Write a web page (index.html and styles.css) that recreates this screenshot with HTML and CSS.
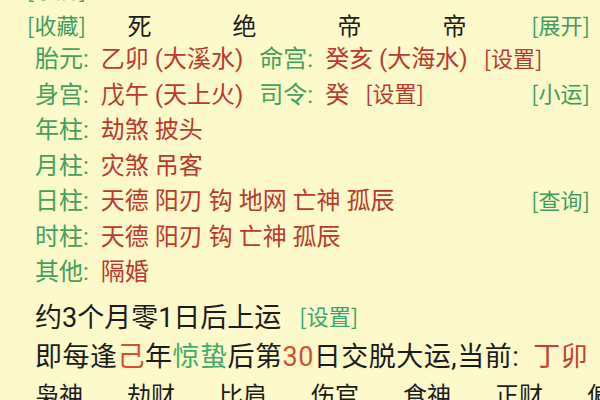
FILE: index.html
```html
<!DOCTYPE html>
<html lang="zh-CN">

<head>
    <meta charset="UTF-8">
    <meta name="viewport" content="width=device-width, initial-scale=1.0">
    <title>排盘</title>
    <link rel="stylesheet" href="styles.css">
</head>

<body>
    <div class="pan">
        <div class="row">
            <span class="link">[字牌]</span>
        </div>
        <div class="row head">
            <span class="link first">[收藏]</span>
            <span class="cell">死</span>
            <span class="cell">绝</span>
            <span class="cell">帝</span>
            <span class="cell">帝</span>
            <span class="link right">[展开]</span>
        </div>

        <div class="info">
            <div class="row">
                <span class="lab">胎元:</span>
                <span class="val">乙卯 (大溪水)</span>
                <span class="lab">命宫:</span>
                <span class="val">癸亥 (大海水)</span>
                <span class="val btn">[设置]</span>
            </div>
            <div class="row">
                <span class="lab">身宫:</span>
                <span class="val">戊午 (天上火)</span>
                <span class="lab">司令:</span>
                <span class="val">癸</span>
                <span class="val btn">[设置]</span>
                <span class="link right">[小运]</span>
            </div>
            <div class="row">
                <span class="lab">年柱:</span>
                <span class="val">劫煞 披头</span>
            </div>
            <div class="row">
                <span class="lab">月柱:</span>
                <span class="val">灾煞 吊客</span>
            </div>
            <div class="row">
                <span class="lab">日柱:</span>
                <span class="val">天德 阳刃 钩 地网 亡神 孤辰</span>
                <span class="link right">[查询]</span>
            </div>
            <div class="row">
                <span class="lab">时柱:</span>
                <span class="val">天德 阳刃 钩 亡神 孤辰</span>
            </div>
            <div class="row">
                <span class="lab">其他:</span>
                <span class="val">隔婚</span>
            </div>
        </div>

        <div class="yun">
            <div class="row">
                <span>约3个月零1日后上运</span>
                <span class="set">[设置]</span>
            </div>
            <div class="row jiao">
                <span>即每逢<em class="hot">己</em>年<em class="jie">惊蛰</em>后第<em class="hot">30</em>日交脱大运,当前:</span>
                <span class="now">丁卯</span>
            </div>
            <div class="row shen">
                <span>枭神</span>
                <span>劫财</span>
                <span>比肩</span>
                <span>伤官</span>
                <span>食神</span>
                <span>正财</span>
                <span>偏财</span>
            </div>
        </div>
    </div>
</body>

</html>
```

FILE: styles.css
```css
* {
    padding: 0;
    margin: 0;
}

html,
body {
    height: 100%;
    background-color: #fcf9ca;
    overflow: hidden;
}

body {
    font-family: Roboto, "Noto Sans CJK SC", sans-serif;
    color: #222;
}

.pan {
    margin-top: -30px;
    padding: 0 10px 0 27px;
}

.row {
    display: flex;
    align-items: center;
    height: 36px;
    font-size: 24px;
    white-space: nowrap;
}

/* 方括号按钮 */
.link,
.btn,
.set {
    font-family: "Noto Sans CJK SC", sans-serif;
    font-size: 22px;
}

.link {
    color: #3f9e5e;
}

.right {
    margin-left: auto;
}

/* 十二长生 */
.head .first {
    width: 60px;
}

.head .cell {
    width: 105px;
    text-align: center;
    color: #1e1e1e;
}

.info {
    padding-left: 8px;
    margin-top: -3px;
}

.info .row {
    height: 35.5px;
    gap: 16px;
}

.lab {
    color: #45a05c;
    margin-right: -4px;
}

.val {
    color: #bb3a2d;
}

.yun {
    padding-left: 8px;
    margin-top: 8px;
}

.yun .row {
    height: 39px;
    font-size: 27px;
    color: #1c1c1c;
}

.yun em {
    font-style: normal;
}

.hot {
    color: #d2502e;
}

.jie {
    color: #3fae68;
}

.set {
    color: #3aa56c;
    margin-left: 18px;
}

.yun .jiao {
    letter-spacing: 0.5px;
}

.now {
    color: #c8402c;
    margin-left: 14px;
}

.yun .shen {
    font-size: 24px;
    gap: 44px;
}
```
